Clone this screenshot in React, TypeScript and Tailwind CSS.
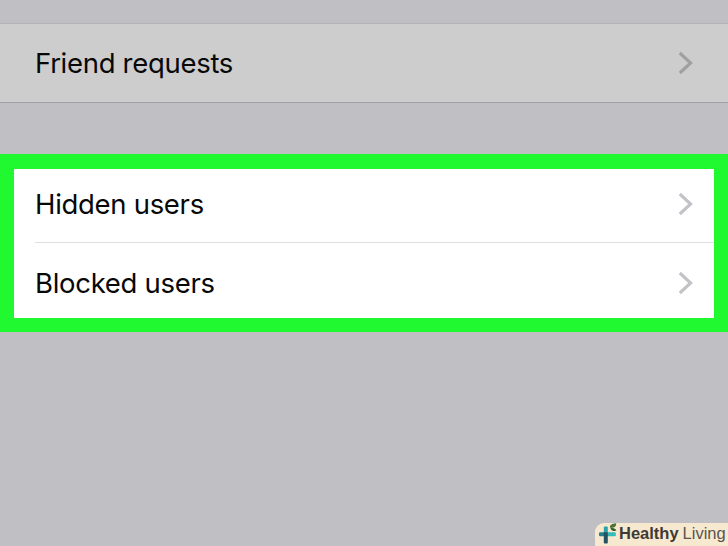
import type { FC } from 'react'

interface RowProps {
    label: string
    chevronClass: string
}

const Chevron: FC<{ className: string }> = ({ className }) => (
    <svg width="16" height="24" viewBox="0 0 16 24" fill="none" className={className}>
        <path d="M2.8 2L13.6 12L2.8 22" stroke="currentColor" strokeWidth="3.1" />
    </svg>
)

const Row: FC<RowProps> = ({ label, chevronClass }) => (
    <>
        <span className="text-[27.5px] leading-8 tracking-[-0.3px] whitespace-nowrap">{label}</span>
        <Chevron className={chevronClass} />
    </>
)

const BrandMark: FC = () => (
    <svg width="24" height="23" viewBox="0 0 24 23" className="shrink-0">
        <path d="M9.8 3.4H11.8Q12.8 3.4 12.8 4.4V10.5H8.8V4.4Q8.8 3.4 9.8 3.4Z" fill="#2ba3aa" />
        <path d="M12 9.3H19.8Q20.8 9.3 20.8 10.3V12.3Q20.8 13.3 19.8 13.3H12Z" fill="#35bcb9" />
        <path d="M5 9.3H9.8V13.3H5Q4 13.3 4 12.3V10.3Q4 9.3 5 9.3Z" fill="#24808c" />
        <path d="M8.8 9.3H12.8V19.4Q12.8 20.4 11.8 20.4H9.8Q8.8 20.4 8.8 19.4Z" fill="#245365" />
        <path d="M15 4.8C14.5 2 16.3 0.8 21.2 0.3C21.4 3.6 19.2 5.4 15 4.8Z" fill="#4d7435" />
        <path d="M15.4 5.2C18 4.5 20.6 5.2 21.4 7.6C18.8 8.6 16.4 7.8 15.4 5.2Z" fill="#315b2c" />
    </svg>
)

const App: FC = () => {
    return (
        <div className="relative h-[546px] w-[728px] overflow-hidden bg-[#c0bfc4] font-['Inter',sans-serif] text-[#080808]">
            <div className="pt-[23px]">
                <div className="flex h-20 items-center justify-between border-y border-t-[#b3b3b5] border-b-[#a1a1a4] bg-[#cdcdcd] pr-[35px] pl-[35px]">
                    <Row label="Friend requests" chevronClass="text-[#a0a0a1]" />
                </div>
            </div>

            {/* highlighted group */}
            <div className="mt-[51px] bg-[#20f92f] pt-[14.5px] pr-[14.5px] pb-[14px] pl-[14px]">
                <div className="h-[149px] bg-white pl-[21px]">
                    <div className="flex h-[74px] items-center justify-between border-b border-[#dedee0] pr-[20.5px] pb-[2px]">
                        <Row label="Hidden users" chevronClass="text-[#c3c3c7]" />
                    </div>
                    <div className="flex h-[75px] items-center justify-between pt-[6px] pr-[20.5px]">
                        <Row label="Blocked users" chevronClass="text-[#c3c3c7]" />
                    </div>
                </div>
            </div>

            {/* watermark */}
            <div className="absolute right-0 bottom-0 flex h-[23px] w-[133px] items-center rounded-tl-[9px] bg-[#f7e9d0] font-['Liberation_Sans',sans-serif] text-[16.5px] leading-[21px] whitespace-nowrap text-[#3e3a34]">
                <BrandMark />
                <span className="pb-0.5 font-bold">Healthy</span>
                <span className="ml-1 pb-0.5 text-[#5a554c]">Living</span>
            </div>
        </div>
    )
}

export default App
